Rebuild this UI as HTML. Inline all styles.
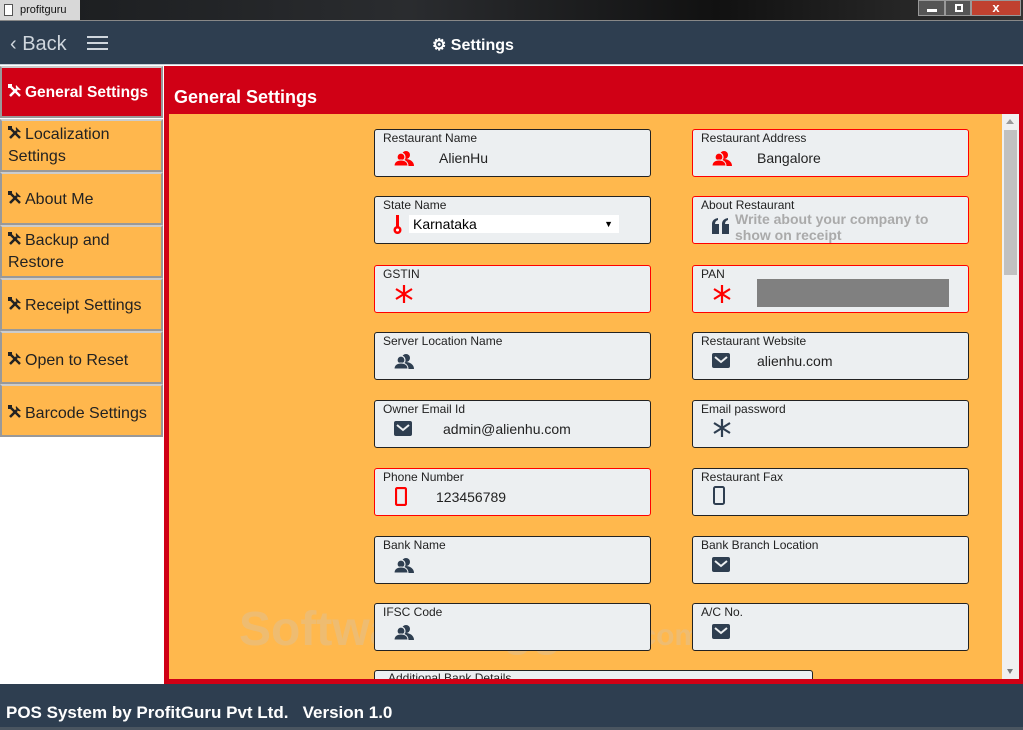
<!DOCTYPE html>
<html><head><meta charset="utf-8"><style>
*{margin:0;padding:0;box-sizing:border-box}
body{width:1023px;height:730px;overflow:hidden;position:relative;font-family:"Liberation Sans",sans-serif;background:#fff}
.a{position:absolute}
.tb{left:0;top:0;width:1023px;height:21px;background:linear-gradient(90deg,#1a1c1e,#2a2c2f 40%,#111 70%,#333);border-bottom:1px solid #888}
.nav{left:0;top:21px;width:1023px;height:44px;background:#2e3e50;border-bottom:1px solid #c8d0d8}
.side{left:0;width:163px;background:#ffb74d;border:2px solid #999;border-top-color:#ccc;color:#222;font-size:16px;line-height:22px;padding:3px 6px}
.side svg{display:inline-block;vertical-align:-1px;margin-right:3px}
.f{position:absolute;background:#eceff1;border:1px solid #222;border-radius:3px;height:48px}
.f.r{border-color:#f00}
.f .l{position:absolute;left:8px;top:1px;font-size:12px;color:#222}
.f .v{position:absolute;left:64px;top:20px;font-size:14px;color:#222}
.f svg{position:absolute;left:19px;top:20px}
</style></head><body>
<svg width="0" height="0" style="position:absolute"><defs>
<symbol id="t" viewBox="0 0 14 14"><path d="M2 12L9 5" stroke="currentColor" stroke-width="2.6"/><path d="M8 1a4 4 0 0 0 5 5l-2-2z" fill="currentColor"/><path d="M2 2l10 10" stroke="currentColor" stroke-width="2.4"/><rect x="0" y="0" width="4" height="4" fill="currentColor"/></symbol>
<symbol id="u" viewBox="0 0 20 16"><circle cx="12" cy="5" r="4"/><path d="M6 16c0-5 3-7 6-7s8 2 8 7z"/><circle cx="7" cy="7" r="4" stroke="#eceff1" stroke-width="1.2"/><path d="M0 16c0-4 3-6 7-6s7 2 7 6z" stroke="#eceff1" stroke-width="1"/></symbol>
<symbol id="m" viewBox="0 0 18 15"><rect width="18" height="15" rx="2"/><path d="M3 4l6 5 6-5" stroke="#eceff1" stroke-width="2" fill="none"/></symbol>
<symbol id="s" viewBox="0 0 20 20"><path d="M10 1v18M2 5l16 10M18 5L2 15" stroke="currentColor" stroke-width="2.2"/></symbol>
</defs></svg>
<div class="a tb"></div>
<div class="a" style="left:0;top:0;width:80px;height:20px;background:#d8d8d8;font-size:11px;line-height:20px;padding-left:20px;color:#111">profitguru</div>
<div class="a" style="left:4px;top:4px;width:9px;height:12px;border:1px solid #555;background:#fff"></div>
<div class="a" style="left:918px;top:0;width:27px;height:16px;background:#555;border:1px solid #999"><div class="a" style="left:8px;top:8px;width:10px;height:3px;background:#fff"></div></div>
<div class="a" style="left:945px;top:0;width:26px;height:16px;background:#555;border:1px solid #999"><div class="a" style="left:9px;top:3px;width:8px;height:8px;border:2px solid #fff"></div></div>
<div class="a" style="left:971px;top:0;width:50px;height:16px;background:#c0412f;border:1px solid #999;color:#fff;font-weight:bold;font-size:13px;text-align:center;line-height:14px">x</div>
<div class="a nav"></div>
<div class="a" style="left:10px;top:33px;color:#cfd6dd;font-size:20px">&#8249; Back</div>
<div class="a" style="left:87px;top:36px;width:21px;height:2px;background:#cfd6dd;box-shadow:0 6px 0 #cfd6dd,0 12px 0 #cfd6dd"></div>
<div class="a" style="left:432px;top:35px;color:#fff;font-size:16px;font-weight:bold">&#9881; Settings</div>
<div class="a side" style="top:66px;height:52px;background:#d00015;color:#fff;font-weight:bold;line-height:44px;white-space:nowrap;font-size:15.5px"><svg width="14" height="14"><use href="#t"/></svg>General Settings</div>
<div class="a side" style="top:119px;height:53px"><svg width="14" height="14"><use href="#t"/></svg>Localization Settings</div>
<div class="a side" style="top:172px;height:53px;line-height:45px"><svg width="14" height="14"><use href="#t"/></svg>About Me</div>
<div class="a side" style="top:225px;height:53px"><svg width="14" height="14"><use href="#t"/></svg>Backup and Restore</div>
<div class="a side" style="top:278px;height:53px;line-height:45px"><svg width="14" height="14"><use href="#t"/></svg>Receipt Settings</div>
<div class="a side" style="top:331px;height:53px;line-height:50px"><svg width="14" height="14"><use href="#t"/></svg>Open to Reset</div>
<div class="a side" style="top:384px;height:53px;line-height:50px"><svg width="14" height="14"><use href="#t"/></svg>Barcode Settings</div>
<div class="a" style="left:164px;top:66px;width:859px;height:618px;background:#d00015"></div>
<div class="a" style="left:174px;top:87px;color:#fff;font-size:18px;font-weight:bold">General Settings</div>
<div class="a" style="left:169px;top:114px;width:834px;height:565px;background:#ffb84d;overflow:hidden">
<div class="a" style="left:70px;top:488px;font-size:48px;font-weight:bold;color:rgba(200,200,200,0.3);white-space:nowrap">SoftwareSuggest<span style="font-size:30px">.com</span></div>
</div>
<div class="a" style="left:1002px;top:114px;width:17px;height:565px;background:#f0f0f0"></div>
<div class="a" style="left:1004px;top:130px;width:13px;height:145px;background:#c1c1c1"></div>
<div class="a" style="left:1006px;top:119px;width:0;height:0;border:4px solid transparent;border-bottom:5px solid #999;border-top:0"></div>
<div class="a" style="left:1007px;top:669px;width:0;height:0;border:3px solid transparent;border-top:5px solid #777;border-bottom:0"></div>

<div class="f" style="left:374px;top:129px;width:277px"><span class="l">Restaurant Name</span><svg width="20" height="16" fill="#f00"><use href="#u"/></svg><span class="v">AlienHu</span></div>
<div class="f r" style="left:692px;top:129px;width:277px"><span class="l">Restaurant Address</span><svg width="20" height="16" fill="#f00"><use href="#u"/></svg><span class="v">Bangalore</span></div>
<div class="f" style="left:374px;top:196px;width:277px"><span class="l">State Name</span><svg width="10" height="20" style="left:18px;top:18px"><rect x="3" y="0" width="3" height="13" fill="#f00"/><circle cx="4.5" cy="15" r="4" fill="#f00"/><circle cx="4.5" cy="15" r="1.5" fill="#fff"/></svg><div class="a" style="left:34px;top:18px;width:210px;height:18px;background:#fff;font-size:14px;padding-left:4px;line-height:18px">Karnataka<span style="position:absolute;right:6px;font-size:9px">&#9660;</span></div></div>
<div class="f r" style="left:692px;top:196px;width:277px"><span class="l">About Restaurant</span><svg width="17" height="16" viewBox="0 0 17 16" style="left:19px;top:21px" fill="#2e3e50"><path d="M0 6Q0 1 6 0v2Q3 3 3 6h4v10H0z"/><path d="M10 6Q10 1 16 0v2Q13 3 13 6h4v10h-7z"/></svg><span class="a" style="left:42px;top:14px;font-size:14px;font-weight:bold;color:#aaa;line-height:16px">Write about your company to<br>show on receipt</span></div>
<div class="f r" style="left:374px;top:265px;width:277px"><span class="l">GSTIN</span><svg width="20" height="20" style="color:#f00;top:18px"><use href="#s"/></svg></div>
<div class="f r" style="left:692px;top:265px;width:277px"><span class="l">PAN</span><svg width="20" height="20" style="color:#f00;top:18px"><use href="#s"/></svg><div class="a" style="left:64px;top:13px;width:192px;height:28px;background:#808080"></div></div>
<div class="f" style="left:374px;top:332px;width:277px"><span class="l">Server Location Name</span><svg width="20" height="16" fill="#2e3e50"><use href="#u"/></svg></div>
<div class="f" style="left:692px;top:332px;width:277px"><span class="l">Restaurant Website</span><svg width="18" height="15" fill="#2e3e50"><use href="#m"/></svg><span class="v">alienhu.com</span></div>
<div class="f" style="left:374px;top:400px;width:277px"><span class="l">Owner Email Id</span><svg width="18" height="15" fill="#2e3e50"><use href="#m"/></svg><span class="v" style="left:68px">admin@alienhu.com</span></div>
<div class="f" style="left:692px;top:400px;width:277px"><span class="l">Email password</span><svg width="20" height="20" style="color:#2e3e50;top:17px"><use href="#s"/></svg></div>
<div class="f r" style="left:374px;top:468px;width:277px"><span class="l">Phone Number</span><svg width="12" height="19" style="left:20px;top:18px"><rect x="1" y="1" width="10" height="17" rx="1.5" fill="none" stroke="#f00" stroke-width="2.2"/></svg><span class="v" style="left:61px">123456789</span></div>
<div class="f" style="left:692px;top:468px;width:277px"><span class="l">Restaurant Fax</span><svg width="12" height="19" style="left:20px;top:17px"><rect x="1" y="1" width="10" height="17" rx="1.5" fill="none" stroke="#2e3e50" stroke-width="2"/></svg></div>
<div class="f" style="left:374px;top:536px;width:277px"><span class="l">Bank Name</span><svg width="20" height="16" fill="#2e3e50"><use href="#u"/></svg></div>
<div class="f" style="left:692px;top:536px;width:277px"><span class="l">Bank Branch Location</span><svg width="18" height="15" fill="#2e3e50"><use href="#m"/></svg></div>
<div class="f" style="left:374px;top:603px;width:277px"><span class="l">IFSC Code</span><svg width="20" height="16" fill="#2e3e50"><use href="#u"/></svg></div>
<div class="f" style="left:692px;top:603px;width:277px"><span class="l">A/C No.</span><svg width="18" height="15" fill="#2e3e50"><use href="#m"/></svg></div>
<div class="a" style="left:374px;top:670px;width:439px;height:9px;background:#eceff1;border:1px solid #222;border-bottom:0;border-radius:3px 3px 0 0;overflow:hidden"><span class="a" style="left:13px;top:0px;font-size:12px;color:#222">Additional Bank Details</span></div>

<div class="a" style="left:0;top:684px;width:1023px;height:46px;background:#2e3e50"></div>
<div class="a" style="left:6px;top:703px;color:#fff;font-size:17px;font-weight:bold">POS System by ProfitGuru Pvt Ltd.&nbsp;&nbsp; Version 1.0</div>
<div class="a" style="left:0;top:727px;width:1023px;height:3px;background:#4a5560"></div>
</body></html>
